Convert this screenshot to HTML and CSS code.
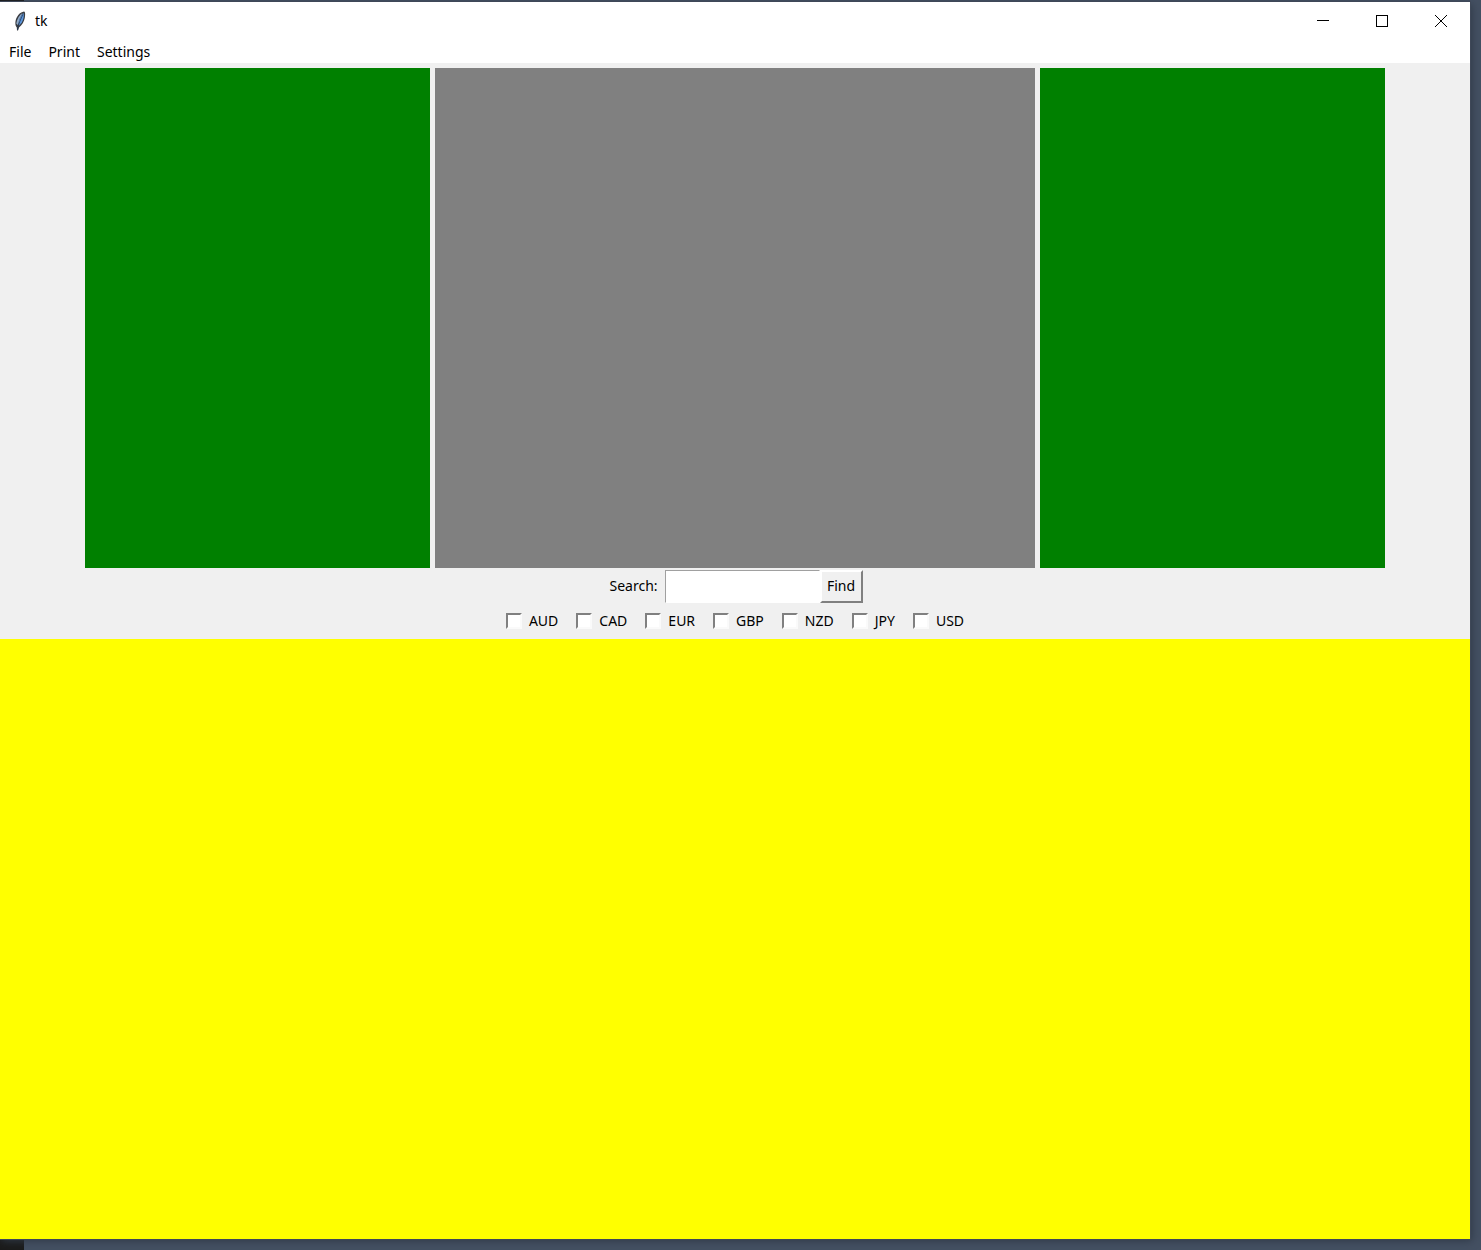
FILE: index.html
```html
<!DOCTYPE html>
<html lang="en">
<head>
<meta charset="utf-8">
<title>tk</title>
<link rel="stylesheet" href="styles.css">
</head>
<body>
<main class="window">
  <header class="titlebar">
    <svg class="feather" width="14" height="20" viewBox="0 0 14 20" aria-hidden="true">
      <path d="M11 .5 C12.500 1 12.300 4 11.800 7 C11.200 10.500 9 14 6 16.500 L5 19.500 L4 19.500 L3.800 16.500 C1.800 14.500 2 9.500 4 6 C5.500 3 8 1 11 .5Z" fill="#3a3d42"/>
      <path d="M10.500 2 C11.300 4 10.800 8 8.800 11.500 L5.800 14.800 L5.500 11 L8 5Z" fill="#5c96dc"/>
      <path d="M9.500 2 C6.500 4 4 8 3.300 12.500 L4.800 14 L6.500 8Z" fill="#8fa9c8"/>
      <path d="M9.800 3.500 C8 8 5.500 12 4.500 19" fill="none" stroke="#1e3554" stroke-width=".8"/>
    </svg>
    <span class="title">tk</span>
    <div class="controls">
      <button class="control" aria-label="Minimize"><svg width="12" height="12" shape-rendering="crispEdges"><path d="M0 5.500H12" stroke="#000"/></svg></button>
      <button class="control" aria-label="Maximize"><svg width="12" height="12" shape-rendering="crispEdges"><path d="M.5 .5H11.500V11.500H.5Z" fill="none" stroke="#000"/></svg></button>
      <button class="control" aria-label="Close"><svg width="12" height="12"><path d="M0 0L12 12M12 0L0 12" stroke="#000"/></svg></button>
    </div>
  </header>
  <nav class="menubar">
    <button class="menu">File</button>
    <button class="menu">Print</button>
    <button class="menu">Settings</button>
  </nav>
  <section class="panels">
    <div class="panel side"></div>
    <div class="panel center"></div>
    <div class="panel side"></div>
  </section>
  <form class="search">
    <label class="search-label" for="query">Search:</label>
    <input class="query" id="query" type="text">
    <button class="find" type="button">Find</button>
  </form>
  <div class="currencies">
    <label class="currency"><input class="tick" type="checkbox">AUD</label>
    <label class="currency"><input class="tick" type="checkbox">CAD</label>
    <label class="currency"><input class="tick" type="checkbox">EUR</label>
    <label class="currency"><input class="tick" type="checkbox">GBP</label>
    <label class="currency"><input class="tick" type="checkbox">NZD</label>
    <label class="currency"><input class="tick" type="checkbox">JPY</label>
    <label class="currency"><input class="tick" type="checkbox">USD</label>
  </div>
  <section class="output"></section>
</main>
</body>
</html>
```
FILE: styles.css
```css
* {
  box-sizing: border-box;
}

body {
  margin: 0;
  padding: 2px 11px 11px 0;
  background: linear-gradient(90deg, #1b1b1b 24px, #445062 24px);
  color: #000;
  font: 14px/20px "Noto Sans", "Open Sans", sans-serif;
}

button,
input {
  margin: 0;
  padding: 0;
  border: 0;
  border-radius: 0;
  background: none;
  color: inherit;
  font: inherit;
}

.window {
  background: #f0f0f0;
  box-shadow: 0 0 0 1px #3f4858, 2px 2px 8px #303a48;
}

.titlebar {
  display: flex;
  align-items: center;
  height: 38px;
  padding-left: 13px;
  background: #fff;
}

.feather {
  margin-right: 8px;
}

.controls {
  display: flex;
  align-self: stretch;
  margin-left: auto;
}

.control {
  display: flex;
  align-items: center;
  justify-content: center;
  width: 59px;
}

.menubar {
  display: flex;
  gap: 17px;
  height: 23px;
  padding: 2px 9px 0;
  background: #fff;
}

.menu {
  height: 20px;
}

.panels {
  display: flex;
  justify-content: center;
  gap: 5px;
  padding-top: 5px;
}

.panel {
  height: 500px;
}

.side {
  flex: 0 1 345px;
  background: #008000;
}

.center {
  flex: 0 1 600px;
  background: #808080;
}

.search {
  display: flex;
  align-items: center;
  justify-content: center;
  height: 36px;
  padding-left: 2px;
}

.search-label {
  margin-right: 7px;
}

.query {
  width: 155px;
  height: 33px;
  padding: 0 4px;
  border: 1px solid;
  border-color: #a0a0a0 #fff #fff #a0a0a0;
  background: #fff;
}

.find {
  width: 43px;
  height: 33px;
  border: 2px solid;
  border-color: #fff #808080 #808080 #fff;
  background: #f0f0f0;
}

.currencies {
  display: flex;
  align-items: center;
  justify-content: center;
  gap: 18px;
  height: 35px;
  padding-bottom: 2px;
}

.currency {
  display: flex;
  align-items: center;
  gap: 7px;
}

.tick {
  width: 16px;
  height: 16px;
  appearance: none;
  border: 2px solid;
  border-color: #808080 #fafafa #fafafa #808080;
  background: #fff;
}

.tick:checked {
  background: #000;
  background-clip: content-box;
  padding: 2px;
}

.output {
  height: 600px;
  background: #ff0;
}
```
